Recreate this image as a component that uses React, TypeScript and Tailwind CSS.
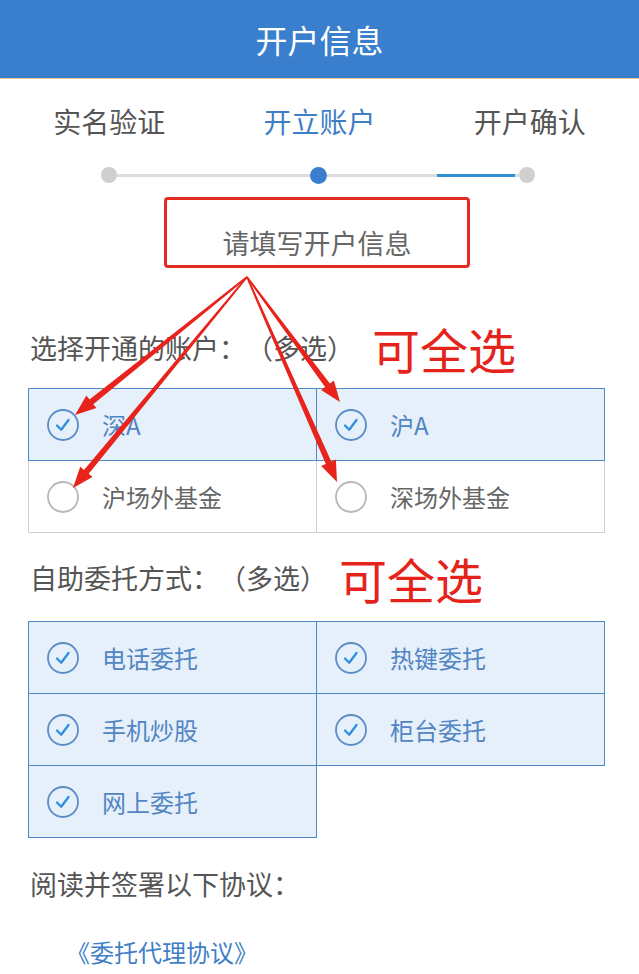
import React from "react";

const font = { fontFamily: '"Noto Sans CJK SC", "Noto Sans", sans-serif' };

interface Option {
  label: string;
  checked: boolean;
}

const accounts: Option[] = [
  { label: "深A", checked: true },
  { label: "沪A", checked: true },
  { label: "沪场外基金", checked: false },
  { label: "深场外基金", checked: false },
];

const methods: Option[] = [
  { label: "电话委托", checked: true },
  { label: "热键委托", checked: true },
  { label: "手机炒股", checked: true },
  { label: "柜台委托", checked: true },
  { label: "网上委托", checked: true },
];

// tapered red arrow from (x1,y1) to the tip (x2,y2)
function arrowPoints(x1: number, y1: number, x2: number, y2: number) {
  const dx = x2 - x1;
  const dy = y2 - y1;
  const len = Math.hypot(dx, dy);
  const ux = dx / len;
  const uy = dy / len;
  const nx = -uy;
  const ny = ux;
  const headLen = 21;
  const headW = 8;
  const bx = x2 - ux * headLen;
  const by = y2 - uy * headLen;
  const w0 = 0.9;
  const w1 = 3;
  const pts = [
    [x1 + nx * w0, y1 + ny * w0],
    [bx + nx * w1, by + ny * w1],
    [bx + nx * headW, by + ny * headW],
    [x2, y2],
    [bx - nx * headW, by - ny * headW],
    [bx - nx * w1, by - ny * w1],
    [x1 - nx * w0, y1 - ny * w0],
  ];
  return pts.map((p) => p.map((v) => v.toFixed(1)).join(",")).join(" ");
}

function CheckCircle({ checked }: { checked: boolean }) {
  return (
    <svg width="34" height="34" viewBox="0 0 34 34" className="shrink-0">
      <circle
        cx="17"
        cy="17"
        r="15"
        fill={checked ? "none" : "#fff"}
        stroke={checked ? "#5a8cc7" : "#b8b8b8"}
        strokeWidth="1.8"
      />
      {checked && (
        <path d="M11 17.5 L15.2 21.8 L22.5 12" fill="none" stroke="#2f8fe0" strokeWidth="2.3" strokeLinecap="round" strokeLinejoin="round" />
      )}
    </svg>
  );
}

function OptionGrid({ options }: { options: Option[] }) {
  return (
    <div className="grid grid-cols-2 pl-px pt-px">
      {options.map((o) => (
        <div
          key={o.label}
          className={
            o.checked
              ? "relative z-10 -ml-px -mt-px h-[73px] flex items-center gap-[22px] pl-[17px] border-[1.5px] border-[#4f88c6] bg-[#e6f0fb]"
              : "-ml-px -mt-px h-[73px] flex items-center gap-[22px] pl-[17px] border border-[#cfcfcf] bg-white"
          }
        >
          <CheckCircle checked={o.checked} />
          <span className={o.checked ? "text-[24px] text-[#5285c2]" : "text-[24px] text-[#666]"}>{o.label}</span>
        </div>
      ))}
    </div>
  );
}

export default function App() {
  return (
    <div className="relative w-[639px] h-[974px] bg-white overflow-hidden [text-spacing-trim:space-all]" style={font}>
      <div className="h-[79px] bg-[#3a7fcd] border-b border-[#e9c98c] flex items-center justify-center text-white text-[32px]">
        开户信息
      </div>

      <div className="grid grid-cols-3 px-[4px] pt-[22px] text-[28px] leading-[40px] text-center text-[#555]">
        <div>实名验证</div>
        <div className="text-[#3f7fc6]">开立账户</div>
        <div>开户确认</div>
      </div>

      <div className="mt-[26px] flex items-center pl-[101px] pr-[104px] h-[16px]">
        <span className="w-[16px] h-[16px] rounded-full bg-[#cfcfcf] shrink-0" />
        <span className="flex-1 h-[3px] bg-[#dcdcdc]" />
        <span className="w-[17px] h-[17px] rounded-full bg-[#3a7fcd] shrink-0" />
        <span className="w-[110px] h-[3px] bg-[#dcdcdc]" />
        <span className="w-[78px] h-[3px] bg-[#2f8fd6]" />
        <span className="w-[4px] h-[3px] bg-[#dcdcdc]" />
        <span className="w-[16px] h-[16px] rounded-full bg-[#cfcfcf] shrink-0" />
      </div>

      <div className="mt-[14px] ml-[164px] w-[306px] h-[71px] border-[3px] border-[#e32b22] rounded-[4px] flex items-end justify-center pb-[4px]">
        <span className="text-[27px] leading-[36px] text-[#666]">请填写开户信息</span>
      </div>

      <div className="ml-[28px] w-[577px]">
        <div className="mt-[62px] h-[36px] flex items-center pl-[2px]">
          <span className="text-[27px] text-[#555]">选择开通的账户：（多选）</span>
          <span className="ml-[18px] text-[48px] leading-none text-[#e5231b]">可全选</span>
        </div>

        <div className="mt-[22px]">
          <OptionGrid options={accounts} />
        </div>

        <div className="mt-[27px] h-[36px] flex items-center pl-[2px]">
          <span className="text-[27px] text-[#555]">自助委托方式：（多选）</span>
          <span className="ml-[12px] text-[48px] leading-none text-[#e5231b]">可全选</span>
        </div>

        <div className="mt-[25px]">
          <OptionGrid options={methods} />
        </div>

        <div className="mt-[28px] h-[36px] flex items-center pl-[2px] text-[27px] text-[#555]">阅读并签署以下协议：</div>

        <div className="mt-[34px] pl-[38px] text-[24px] leading-[32px] text-[#3f7fc6]">《委托代理协议》</div>
      </div>

      <svg className="absolute inset-0 z-20 pointer-events-none" width="639" height="974" viewBox="0 0 639 974">
        {[
          [75, 415],
          [73, 488],
          [340, 402],
          [337, 482],
        ].map(([x, y], i) => (
          <polygon key={i} points={arrowPoints(247, 277, x, y)} fill="#e8231b" />
        ))}
      </svg>
    </div>
  );
}
